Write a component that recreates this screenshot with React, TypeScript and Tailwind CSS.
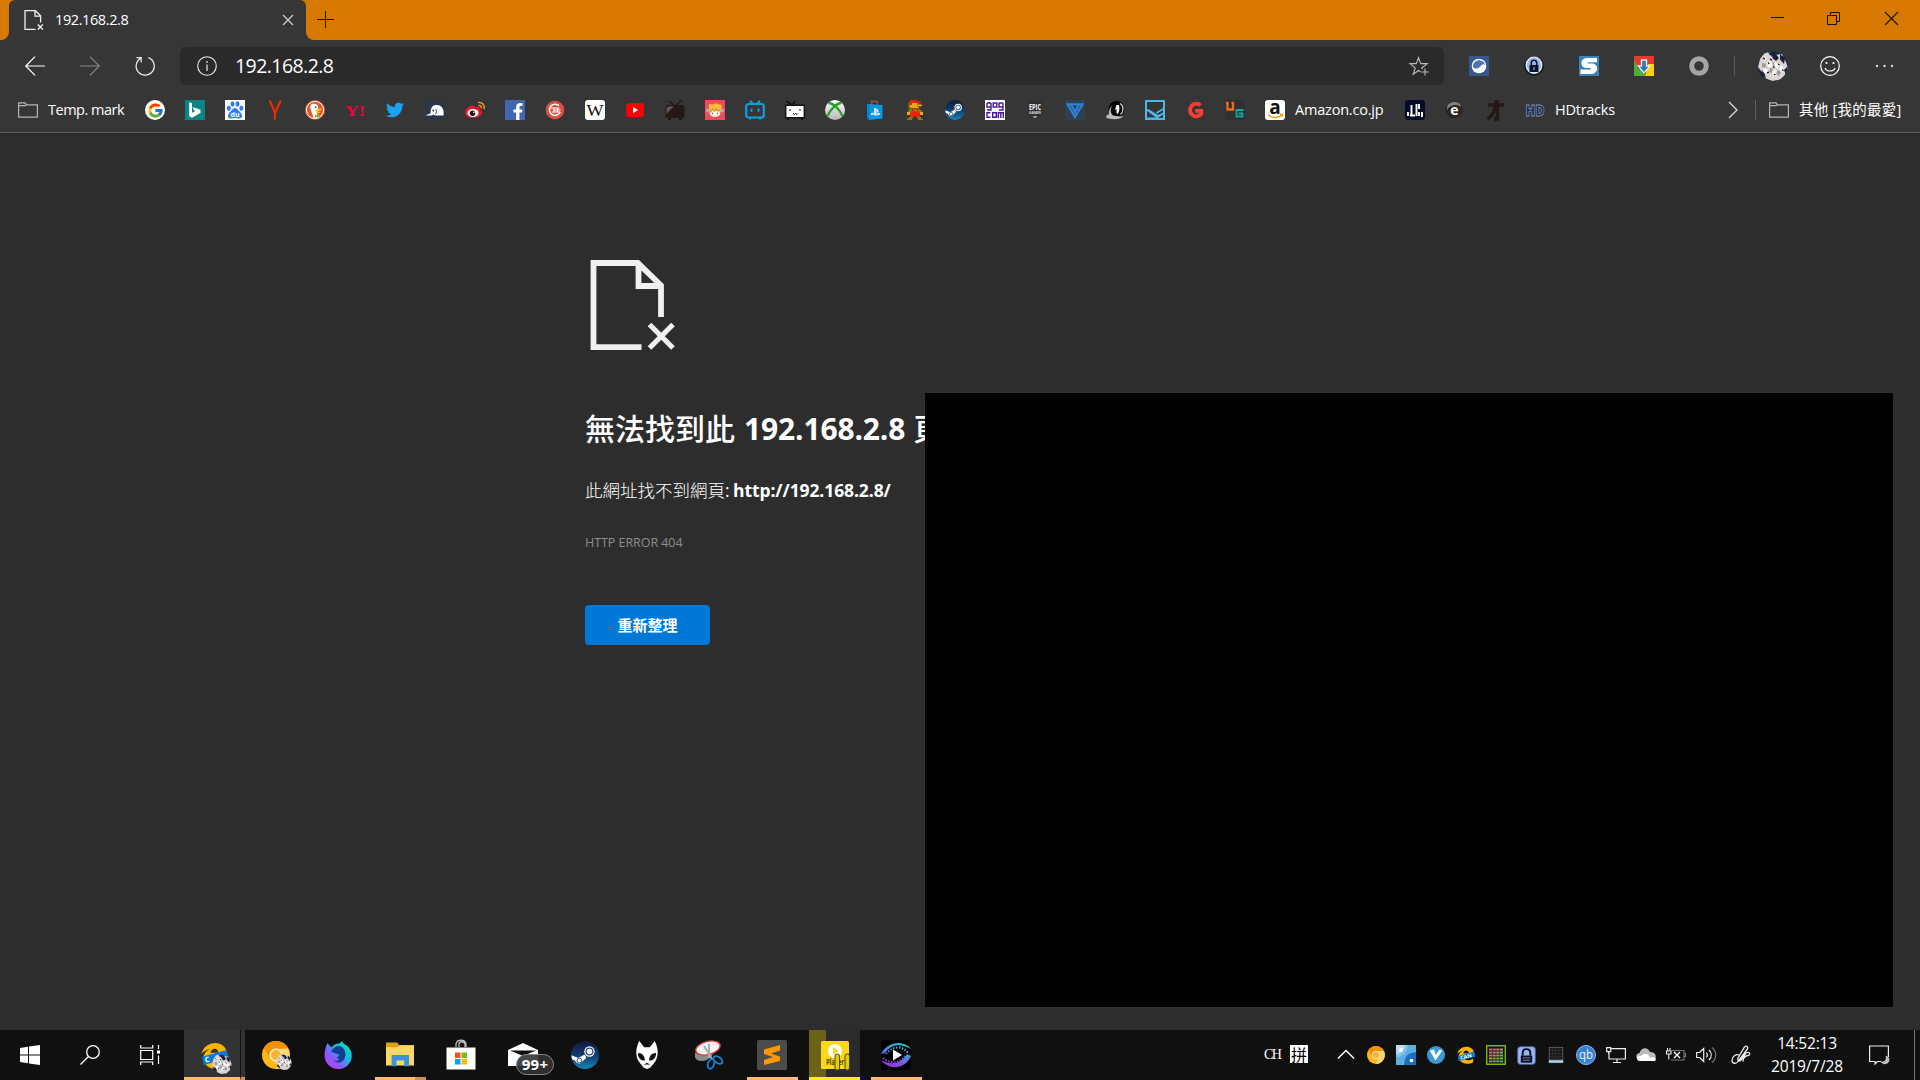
import React, { type ReactNode } from "react";
import { FcGoogle } from "react-icons/fc";
import { FaTwitter, FaFacebookF, FaPlaystation } from "react-icons/fa";

const UI = "font-['Open_Sans','Noto_Sans_CJK_TC',sans-serif]";

function Ico({ children, s = 20, vb = "0 0 20 20", className = "" }: { children: ReactNode; s?: number; vb?: string; className?: string }) {
  return (
    <svg width={s} height={s} viewBox={vb} fill="none" className={"shrink-0 overflow-visible " + className}>
      {children}
    </svg>
  );
}

function Txt({ x = 10, y, size, fill, weight = 700, family = "Open Sans", children, len }: { x?: number; y: number; size: number; fill: string; weight?: number; family?: string; children: ReactNode; len?: number }) {
  return (
    <text x={x} y={y} fontSize={size} fill={fill} fontWeight={weight} fontFamily={`'${family}', 'Noto Sans CJK TC', sans-serif`} textAnchor="middle" textLength={len} lengthAdjust="spacingAndGlyphs">
      {children}
    </text>
  );
}

const Folder = () => (
  <Ico>
    <path d="M.6 3.200V17.200H19.400V4.800H8.600L7 2.800H.6V5.600H7L8.600 4.800" stroke="#b4b4b4" strokeWidth="1.200" />
  </Ico>
);

const BrokenPage = () => (
  <Ico>
    <path d="M11.500 19.300H1V.7h10.400l5.200 5v6.800M11 .7v5.400h5.600" stroke="#f0f0f0" strokeWidth="1.300" />
    <path d="M13.800 14.400l5 5m0-5l-5 5" stroke="#f0f0f0" strokeWidth="1.400" />
  </Ico>
);

const SteamIcon = ({ s = 20, id }: { s?: number; id: string }) => (
  <Ico s={s}>
    <defs>
      <linearGradient id={id} x1="0" y1="0" x2="0" y2="1">
        <stop offset="0" stopColor="#12183c" />
        <stop offset=".55" stopColor="#123f73" />
        <stop offset="1" stopColor="#1387b8" />
      </linearGradient>
    </defs>
    <circle cx="10" cy="10" r="10" fill={`url(#${id})`} />
    <path d="M.2 10.200l5 2 4.600-2.600 1.200 2.400-3.600 3.400C6 17 3.600 16 3 14L.8 13z" fill="#fff" />
    <circle cx="13.200" cy="7.500" r="3.700" fill="#fff" />
    <circle cx="13.200" cy="7.500" r="2.400" stroke="#234a7b" strokeWidth=".9" />
    <circle cx="6" cy="14" r="1.700" stroke="#234a7b" strokeWidth=".7" />
  </Ico>
);

const bookmarks: ReactNode[] = [
  <div className="flex size-5 items-center justify-center rounded-full bg-white"><FcGoogle size={17} /></div>,
  <Ico><path d="M0 0h20v20H0z" fill="#0c8484" /><path d="M4.200 2.200l2.800 1v9.500l3.500-1.700-1.800-.9-1.200-3L15.500 9.800v3.200L7 17.800l-2.800-1.600z" fill="#fff" /></Ico>,
  <Ico>
    <path d="M0 0h20v20H0z" fill="#fff" />
    <g fill="#2f7df6">
      <ellipse cx="3.800" cy="8.200" rx="2" ry="2.700" /><ellipse cx="7.500" cy="4" rx="2" ry="2.700" /><ellipse cx="12.500" cy="4" rx="2" ry="2.700" /><ellipse cx="16.400" cy="8.200" rx="2" ry="2.700" />
      <path d="M10 8c2 0 3 2 4.500 3.500 3 2.700 3.500 6.800.2 7-1.700.2-3-.4-4.700-.4s-3 .6-4.700.4c-3.300-.2-2.800-4.300.2-7C7 10 8 8 10 8z" />
    </g>
    <Txt y={17} size={7} fill="#fff">du</Txt>
  </Ico>,
  <Ico><path d="M4.700.5l5.200 12v7.200M15.700.5l-5.500 12" stroke="#f52a05" strokeWidth="2.100" /></Ico>,
  <Ico>
    <circle cx="10" cy="10" r="10" fill="#de5833" /><circle cx="10" cy="10" r="8.600" stroke="#fff" strokeWidth="1" />
    <path d="M8.500 17.800L5.500 8.500C4.600 5.500 6.500 3.400 9 3.700c3 0 4.300 1.800 4.300 4.300l-1.500 2.500.6 7.300z" fill="#fff" />
    <path d="M10.800 9.700l5.400-1.500v2l-4 1 3.300 1-2.200 1.300-2.500-1z" fill="#fdd20a" /><path d="M10 14.500l2 1 2.500-1v3l-2.500-1-2 1z" fill="#65bc46" /><circle cx="10.500" cy="7.200" r=".9" fill="#2d4f8e" />
  </Ico>,
  <Ico><Txt y={15.500} size={15} fill="#f5003c" weight={700} family="Liberation Serif" len={20}>Y!</Txt></Ico>,
  <FaTwitter size={18} color="#1da1f2" />,
  <Ico><rect width="20" height="20" rx="3" fill="#2d3548" /><path d="M1 15.500c.5-1.500 4-1 4.600-2.500C5.500 8 7.500 5 11 5c4.500-.5 7.500 3 7.600 7v3.500H10l-1.500-1-2 1z" fill="#fff" /><circle cx="8.200" cy="10.500" r=".9" fill="#2d3548" /><path d="M10.500 9c2 2 .8 4.500-.5 5" stroke="#2d3548" /></Ico>,
  <Ico>
    <path d="M0 13C0 9 4 5.500 8 5.500c2 0 1.500 2 1.500 2 3-1.500 5.500-1 5 1.500 4 1.500 3 5 .5 7-5 3.500-15 2.500-15-3z" fill="#e6162d" />
    <ellipse cx="8" cy="13" rx="5.600" ry="4" fill="#fff" /><circle cx="7.500" cy="13.200" r="2.700" fill="#111" /><circle cx="8.700" cy="12.300" r=".8" fill="#fff" />
    <path d="M13 2.600c4-.6 7 2 6.200 6.500M13.500 5.400c2-.2 3.200 1 2.900 3" stroke="#f7941d" strokeWidth="1.500" />
  </Ico>,
  <div className="flex size-5 items-end justify-center overflow-hidden bg-[#4267b2] pl-1.5"><FaFacebookF size={17} color="#fff" /></div>,
  <Ico><circle cx="10" cy="10" r="9.300" fill="#df4e42" /><path d="M14 5.800A5.600 5.600 0 1 0 15.200 12" stroke="#fff" strokeWidth="1.600" /><path d="M5.500 8h9M7 12h8M9 8v4M12.500 8v4M10 10h5.500" stroke="#fff" strokeWidth="1.200" /></Ico>,
  <Ico><rect width="20" height="20" rx="3" fill="#fff" /><Txt y={15.500} size={17} fill="#111" weight={400} family="Liberation Serif" len={17}>W</Txt></Ico>,
  <Ico><rect x="1" y="3" width="18" height="14" rx="3.500" fill="#f00" /><path d="M8 7l5.200 3L8 13z" fill="#fff" /></Ico>,
  <Ico><path d="M4 1l6 5 7-6" stroke="#231815" strokeWidth="1.500" /><rect x=".5" y="5" width="19" height="13" rx="2" fill="#231815" /><path d="M3 18h3v2H3zM14 18h3v2h-3z" fill="#231815" /><path d="M1.500 14V7.500c3-1.500 5-1.500 7-1z" fill="#5b5756" /></Ico>,
  <Ico>
    <path d="M0 0h20v20H0z" fill="#f2475d" /><circle cx="2.700" cy="10.500" r="2" fill="#a9a4c9" /><circle cx="17.300" cy="10.500" r="2" fill="#a9a4c9" /><path d="M4 8C3 4 4 3 7 4.500 9 3 13 3 14.500 4.500c3 0 2.500 2 2 4l-1 4h-11z" fill="#f8bd37" /><ellipse cx="10" cy="13.300" rx="5.300" ry="3.700" fill="#fff3dc" /><path d="M5 12l3-3 1.500 2 2-2L13 11l2-1" stroke="#dc8a32" strokeWidth="1.200" /><path d="M7.500 12.700v1.500M12.500 12.700v1.500" stroke="#834c50" />
  </Ico>,
  <Ico><path d="M5 .8l3 3.200M15 .8L12 4M5 17v2.500M15 17v2.500" stroke="#0aa1dc" strokeWidth="2" /><rect x="1.200" y="4" width="17.600" height="13.500" rx="2.500" stroke="#0aa1dc" strokeWidth="2.200" /><path d="M6.500 8.500v3.200M13.500 8.500v3.200" stroke="#0aa1dc" strokeWidth="2" /></Ico>,
  <Ico><path d="M1.500 1L7 5l3-3.500M3 18v2M17 18v2" stroke="#111" strokeWidth="1.800" /><path d="M.7 5.200h18.600v12.600H.7z" fill="#fff" stroke="#111" strokeWidth="1.400" /><path d="M5 9v2M15 9v2M8 13.500l1.500 1 1-1 1.500 1 1-1" stroke="#111" /></Ico>,
  <Ico>
    <defs><linearGradient id="xball" x1="0" y1="0" x2="0" y2="1"><stop offset="0" stopColor="#fff" /><stop offset="1" stopColor="#b5b5b5" /></linearGradient></defs>
    <circle cx="10" cy="10" r="10" fill="url(#xball)" /><path d="M3.500 3C8 3 14.500 9 17.500 16M16.500 3C12 3 5.500 9 2.500 16" stroke="#2c9e27" strokeWidth="2.300" />
  </Ico>,
  <Ico><path d="M6.500 5V1.200l6 .5V5" stroke="#8a543c" strokeWidth="1.600" /><path d="M2 4l15.500 1v13.500L4 20z" fill="#0798e5" /><path d="M2 4h3l-1 16-2-2z" fill="#0784ca" /><FaPlaystation x={5.500} y={7} size={10} color="#fff" /></Ico>,
  <Ico>
    <path d="M5 0h7v1.500h4V3H4V1.500h1z" fill="#ef2010" /><path d="M5 3h9v1.500h3V6h-3v2H6L3 7V4z" fill="#f5a51c" /><path d="M4 3h3v2H5v2H3V4zM12 3h1.500v2H12zM12 6h4v1h-4z" fill="#7b6404" /><path d="M4 8.500h10l3 2.500v2h-3v2H6v-2H3v-2z" fill="#7e8008" /><path d="M7 8.500h1.500v3H12v-3h1.500v3L15 14v3h-4l-1-1-1 1H5v-3l2-2.500z" fill="#ef2010" /><path d="M4 17h4v1.500H7V20H2v-1.500h2zM12 17h4v1.500h2V20h-5v-1.500h-1z" fill="#7e8008" /><path d="M2 12h3v3H2zM15 12h3v3h-3z" fill="#f5a51c" />
  </Ico>,
  <SteamIcon id="steam-bookmark" />,
  <Ico><path d="M0 0h20v20H0z" fill="#fff" /><path d="M6 3v7H2M2 3h4M2 3v4h4M8.200 3h3.600v4H8.200zM18 3v7h-4M14 3h4M14 3v4h4M5.500 12.700H2v4.500h3.500M7.700 12.700h3.600v4.500H7.700zM13.300 17.900v-5.200h5v5.200M15.800 12.700v5.200" stroke="#46169a" strokeWidth="1.400" /></Ico>,
  <Ico><path d="M3.500 1h13v15L10 19l-6.500-3z" fill="#2f2f2f" /><Txt y={10} size={9.500} fill="#f5f5f5" len={12}>EPIC</Txt><Txt y={14.200} size={4} fill="#ddd" len={12}>GAMES</Txt><path d="M7.500 16.500h5L10 18z" fill="#eee" /></Ico>,
  <Ico><path d="M0 0h20v20H0z" fill="#2f4050" /><path d="M2.500 4.200h15L10 17zM6 4.200L10 12l4-7.800" stroke="#2e84da" strokeWidth="2.100" /></Ico>,
  <Ico><circle cx="11.500" cy="9" r="8" fill="#050505" /><path d="M1 17.500c4 2 14 3 17.500-1.500-4 1-7 0-10.500-.5C5 13 5 8 8 5c-4 3-4 6-4 9.500-2 0-3 1.500-3 3z" fill="#bbb" /><path d="M11.500 5l2.500 0 .5 4-1.500 5-1.500-1V9l-1.500 1z" fill="#fff" /><path d="M15 3.500c4 2 4 8 .5 11" stroke="#ddd" strokeWidth="1.200" /></Ico>,
  <Ico><path d="M0 0h20v20H0z" fill="#4fb6ec" /><path d="M2 2h16v10.500l-5 2.500L5 10 2 9z" fill="#343434" /><path d="M2 11l9 6.500H2zM18 14.500v3.500h-5z" fill="#343434" /><path d="M11.500 13L18 9" stroke="#4fb6ec" strokeWidth="1.500" /></Ico>,
  <Ico><path d="M15.500 5.300A6.300 6.300 0 1 0 16.200 14V10.800H10.200" stroke="#fa3d35" strokeWidth="3.800" /></Ico>,
  <Ico><path d="M0 0h20v20H0z" fill="#303030" /><path d="M1 3h1.500v6.500H8V3H6.500" stroke="#f26a16" strokeWidth="2.300" /><path d="M18.500 10H11.500v6.500h6v-3h-4" stroke="#14a49a" strokeWidth="1.900" /></Ico>,
];

const BookmarkIcon = ({ children }: { children: ReactNode }) => <div className="flex size-5 shrink-0 items-center justify-center">{children}</div>;

const Canary = ({ s = 28 }: { s?: number }) => (
  <Ico s={s}>
    <circle cx="10" cy="10" r="10" fill="#fdb813" />
    <path d="M1.300 5A10 10 0 0 1 18.700 5L10 6.200 5.500 12z" fill="#f39200" />
    <path d="M18.700 5.500A10 10 0 0 1 10 20l4-8-1-6.500z" fill="#fdd477" />
    <circle cx="10" cy="10" r="4.200" fill="#f9b233" stroke="#ffe9b8" strokeWidth="1.200" />
  </Ico>
);

const Husky = ({ s }: { s: number }) => (
  <Ico s={s} vb="0 0 30 30">
    <path d="M2 8L6 2l6-1 5 3 7-1 4 8 2 6-3 7-5 5-8 1-7-3-4-7-3-4z" fill="#d9d5d3" />
    <path d="M10 1l7 1 4 5-3 3-5-4zM22 3l5 4-1 6-4-5zM1 20l5 1 2 6-5-3zM26 19l4-4-2 9z" fill="#17203d" />
    <path d="M6 5l3 2-3 3zM9 12l4-2 2 4-4 3zM17 11l4 3-1 4-4-3zM23 14l3 3-2 5-3-4zM6 17l4 2-1 4-4-2zM14 20l4-1 1 5-4 2zM12 4l3 3-2 2z" fill="#fff" />
    <path d="M4 12l4 1-1 4-3-1zM12 17l3 1-1 4-3-1zM20 19l3 2-2 4-3-2zM14 10l2 2 1 4-2-1z" fill="#a09694" />
    <path d="M5 7l2 1M10 12l1.500.7M15 16l1.500.5M20 13l1.500.8M9 22l2-.8M24 19l1.500.5M16 24l1.500-.8M12 8l2 1" stroke="#25252b" strokeWidth="1.400" />
    <path d="M13 4l2 2M22 8l2 3M4 19l1 2" stroke="#a33f38" strokeWidth=".9" />
  </Ico>
);

const EdgeCan = ({ s, label = "CAN" }: { s: number; label?: string }) => (
  <Ico s={s}>
    <path d="M.3 9C2-1 18-3 19.500 9v3H7c1 4 7 5 11 2v4C9 23-1 17 2.500 9 4 6 7 5 7 5 3.500 6 1.700 7 .3 9zM7 8h6c-.5-4-5-4-6 0z" fill="#fbb404" fillRule="evenodd" />
    <path d="M1 11l18-5 1 6L2 17z" fill="#087bd6" />
    <g transform="rotate(-14 10 12)">{label === "CAN" ? <Txt x={10} y={13.800} size={5.600} fill="#fff" len={13}>CAN</Txt> : <Txt x={4.500} y={13.600} size={5.600} fill="#fff">C</Txt>}</g>
  </Ico>
);

function TopBar() {
  return (
    <header className="flex h-10 bg-[#d77900]">
      <div className="flex w-[9px] bg-[#363636]"><div className="w-[9px] rounded-br-lg bg-[#d77900]" /></div>
      <div className="flex h-10 w-[297px] items-center rounded-t-md bg-[#363636] pl-[15px] pr-[11px]">
        <BrokenPage />
        <span className="ml-[11px] flex-1 text-[14.500px] tracking-[-0.400px] text-white">192.168.2.8</span>
        <Ico s={12} vb="0 0 12 12" className="mr-px"><path d="M1 1l10 10M11 1L1 11" stroke="#ccc" strokeWidth="1.300" /></Ico>
      </div>
      <div className="flex flex-1 bg-[#363636]">
        <div className="flex flex-1 items-center rounded-bl-lg bg-[#d77900] pl-[11px]">
          <Ico s={17} vb="0 0 17 17" className="mb-0.5"><path d="M8.500 0v17M0 8.500h17" stroke="#1a1000" /></Ico>
          <div className="ml-auto flex items-center gap-[43px] pb-[3px] pr-[22px]">
            <Ico s={13} vb="0 0 13 13"><path d="M0 5.500h13" stroke="#111" /></Ico>
            <Ico s={13} vb="0 0 13 13"><path d="M.5 3.500h9v9h-9zM3.500 3.500v-3h9v9h-3" stroke="#111" /></Ico>
            <Ico s={13} vb="0 0 13 13" className="ml-0.5"><path d="M0 0l13 13M13 0L0 13" stroke="#111" strokeWidth="1.100" /></Ico>
          </div>
        </div>
      </div>
    </header>
  );
}

function Toolbar() {
  return (
    <div className="flex h-[52px] items-center bg-[#363636] pl-[25px]">
      <Ico><path d="M20 10H1M10 .7L.8 10l9.200 9.300" stroke="#fff" strokeWidth="1.200" /></Ico>
      <Ico className="ml-[35px]"><path d="M0 10h19M10 .7l9.200 9.300-9.200 9.300" stroke="#858585" strokeWidth="1.200" /></Ico>
      <Ico className="ml-[35px]" s={20} vb="0 0 21 21"><path d="M6.300 2.200A9.500 9.500 0 1 0 14 1.700M1.500 1.700h5v5" stroke="#eee" strokeWidth="1.300" /></Ico>
      <div className="ml-[25px] flex h-[38px] w-[1264px] items-center rounded-md bg-[#2a2a2a] pl-[17px] pr-[15px]">
        <Ico><circle cx="10" cy="10" r="9.300" stroke="#eee" strokeWidth="1.100" /><path d="M10 8.500V15M10 5v2" stroke="#ddd" strokeWidth="1.300" /></Ico>
        <span className="ml-[18px] text-[19.500px] tracking-[-0.560px] text-white">192.168.2.8</span>
        <Ico className="ml-auto"><path d="M13.500 13.200L12.800 12l5.400-4.400h-6.500L9.500 1.500 7.300 7.600H1l5.200 4.300-2 6.400L9.500 14.500l2 1.500M16 12.500v7M12.500 16h7" stroke="#bbb" strokeWidth="1.100" /></Ico>
      </div>
      <div className="ml-[25px] flex items-center gap-[35px]">
        <Ico><path d="M0 0h20v20H0z" fill="#35588f" /><circle cx="10" cy="10" r="7.300" fill="#fff" /><path d="M3.800 10.500a6.300 6.300 0 0 1 12.400-1.500C13 6 11.500 12 8 12.500c-2 .3-3.500-.5-4.200-2z" fill="#4b75ac" /></Ico>
        <Ico><circle cx="10" cy="10" r="9" fill="#9db9f8" stroke="#111" strokeWidth="1.400" /><circle cx="10" cy="9" r="7.800" stroke="#e6ecff" strokeWidth="1.200" /><path d="M5.500 9h9v7h-9z" fill="#101525" /><path d="M7.300 9V6.800c0-3.500 5.400-3.500 5.400 0V9" stroke="#101525" strokeWidth="1.600" /><path d="M10 11v3" stroke="#9db9f8" /></Ico>
        <Ico><path d="M0 0h20v20H0z" fill="#3980bc" /><path d="M18 2H8C.5 2 .5 12 7.500 12h3.500c1.500 0 1.500 1.500 0 1.500H1.500V18H12c8 0 8-10.500 1-10.500H9.500c-1.500 0-1.500-1.300 0-1.300H18z" fill="#fff" /></Ico>
        <Ico><path d="M0 0h20v10H0z" fill="#e33b32" /><path d="M0 4l8 16H0z" fill="#4caf3e" /><path d="M0 20l6-8 6 8z" fill="#4caf3e" /><path d="M20 8v12h-9l3-12z" fill="#fdd208" /><path d="M7.500 4h5v6h3.500L10 17l-6-7h3.500z" fill="#2d7bb7" stroke="#eee" strokeWidth="1.300" /></Ico>
        <Ico><circle cx="10" cy="10" r="7.300" stroke="#a5a5a5" strokeWidth="5" /></Ico>
      </div>
      <div className="ml-[25px] h-5 w-px bg-[#5a5a5a]" />
      <div className="ml-[23px] flex size-[30px] items-center justify-center overflow-hidden rounded-full bg-[#18284d]"><Husky s={30} /></div>
      <Ico className="ml-8"><circle cx="10" cy="10" r="9.300" stroke="#fff" strokeWidth="1.200" /><path d="M5 12c1.500 4 8.500 4 10 0" stroke="#fff" strokeWidth="1.200" /><circle cx="6.500" cy="7" r="1.100" fill="#fff" /><circle cx="13.500" cy="7" r="1.100" fill="#fff" /></Ico>
      <Ico className="ml-[35px]"><circle cx="2" cy="10" r="1.200" fill="#ddd" /><circle cx="9.500" cy="10" r="1.200" fill="#ddd" /><circle cx="17" cy="10" r="1.200" fill="#ddd" /></Ico>
    </div>
  );
}

function BookmarkBar() {
  return (
    <nav className="flex h-[41px] items-center border-b border-[#5c5c5c] bg-[#363636] pb-1 pl-[18px] text-[14.500px] text-white">
      <Folder />
      <span className="ml-2.5 w-[77px] whitespace-nowrap tracking-[-0.500px]">Temp. mark</span>
      <div className="ml-5 flex items-center gap-5">
        {bookmarks.map((b, i) => <BookmarkIcon key={i}>{b}</BookmarkIcon>)}
        <Ico><rect width="20" height="20" rx="3" fill="#fff" /><Txt y={13.500} size={19} fill="#111">a</Txt><path d="M3 14.800c4 3.500 10 3.500 14 .5m-2-.8l2.500-.2-.5 2.200" stroke="#ff9900" strokeWidth="1.300" /></Ico>
      </div>
      <span className="ml-2.5 w-[90px] whitespace-nowrap tracking-[-0.200px]">Amazon.co.jp</span>
      <div className="ml-5 flex items-center gap-5">
        <Ico><rect width="20" height="20" rx="3" fill="#070b2a" /><path d="M3 12v4M6.500 16V5M5 15.500h5M11.500 16V4M14 4v5M14 12v4M17 12v5" stroke="#fff" strokeWidth="1.900" /></Ico>
        <Ico><circle cx="9" cy="10" r="8.500" fill="#2a2424" /><path d="M2 10C1 4 6 1.500 11 2c4 1 5 3 5 5-3-3-11-3-14 3z" fill="#858080" /><Txt x={9.500} y={14.500} size={14} fill="#fff">e</Txt></Ico>
        <Ico><path d="M3 5h16M11.500 0C11 7 9 15 2.500 19M12.500 1v18H9" stroke="#231815" strokeWidth="3.400" /></Ico>
        <Ico><g stroke="#7f94b8" strokeWidth=".8"><Txt y={15.500} size={15} fill="#15294f" len={19} weight={800}>HD</Txt></g></Ico>
      </div>
      <span className="ml-2.5 w-[61px] whitespace-nowrap tracking-[-0.250px]">HDtracks</span>
      <Ico className="ml-[109px]"><path d="M4 2l8 8-8 8" stroke="#ddd" strokeWidth="1.300" /></Ico>
      <div className="ml-[10px] h-5 w-px bg-[#626262]" />
      <div className="ml-[13px] flex items-center gap-[10px]">
        <Folder />
        <span className="whitespace-nowrap tracking-[0.250px]">其他 [我的最愛]</span>
      </div>
    </nav>
  );
}

function ErrorPage() {
  return (
    <main className="relative h-[897px] bg-[#2d2d2d] pl-[585px] pt-[127px] text-white">
      <Ico s={90} vb="0 0 90 90">
        <path d="M56.500 87.200H8.500V3h44.300L76 25.500V57M53.500 3v23H76" stroke="#f0f0f0" strokeWidth="5.800" />
        <path d="M64.500 64.500l23.500 23.500m0-23.500l-23.500 23.500" stroke="#f0f0f0" strokeWidth="5.200" />
      </Ico>
      <h1 className="mt-[58px] flex h-10 items-center whitespace-nowrap text-[30px] font-bold"><span className="w-[159px] font-medium">無法找到此</span><span className="tracking-[-0.150px]">192.168.2.8</span><span className="ml-2 font-medium">頁面</span></h1>
      <p className="mt-[28px] h-7 whitespace-nowrap text-[17.500px] leading-7"><span className="font-['Noto_Sans_CJK_TC',sans-serif] font-light">此網址找不到網頁</span><span className="mr-[3.500px]">:</span><b className="tracking-[-0.100px]">http://192.168.2.8/</b></p>
      <p className="mt-[29px] h-5 text-[12.500px] font-medium leading-5 tracking-[-0.050px] text-[#8e8e8e]">HTTP ERROR 404</p>
      <button className="mt-[52px] flex h-10 w-[125px] items-center justify-center rounded-sm bg-[#0078d7] text-[15px] font-bold">重新整理</button>
      <section className="absolute left-[925px] top-[260px] h-[614px] w-[968px] bg-black" />
    </main>
  );
}

function Task({ w, children, state = "" }: { w: number; children?: ReactNode; state?: string }) {
  return <div style={{ width: w }} className={"flex h-[50px] shrink-0 items-center justify-center " + state}>{children}</div>;
}

const active = "border-b-[3px] border-[#ffb970] pt-[3px]";

function Taskbar() {
  return (
    <footer className="flex h-[50px] bg-[#101010] text-white">
      <Task w={60}><Ico><path d="M0 3l8-1.200V9.500H0zM9 1.600L20 0v9.500H9zM0 10.500h8v7.700L0 17zM9 10.500h11V20L9 18.400z" fill="#fff" /></Ico></Task>
      <Task w={60}><Ico><circle cx="13" cy="7" r="6.300" stroke="#fff" strokeWidth="1.300" /><path d="M8.500 11.500L.5 19.500" stroke="#fff" strokeWidth="1.300" /></Ico></Task>
      <Task w={60}><Ico><path d="M.7 0v3h12V0M.7 20v-3h12v3M.7 5.500h12v9H.7zM18.500 0v4M18.500 10.500V19" stroke="#fff" strokeWidth="1.200" /><path d="M17 5.500h3v3h-3z" fill="#fff" /></Ico></Task>
      <div className="w-1" />
      <Task w={56} state={"bg-[#333333] pl-1 " + active}>
        <div className="relative"><EdgeCan s={27} label="C" /><div className="absolute left-[11px] top-[12px]"><Husky s={20} /></div></div>
      </Task>
      <Task w={5} state="border-b-[3px] border-[#c8935b] border-l border-l-[#101010] bg-[#333333]" />
      <Task w={62}><div className="relative"><Canary /><div className="absolute left-[14px] top-[13px]"><Husky s={16} /></div></div></Task>
      <Task w={62}>
        <Ico s={28}>
          <defs><linearGradient id="fox" x1="1" y1="0" x2="0" y2="1"><stop offset="0" stopColor="#00ef9b" /><stop offset=".4" stopColor="#18b8e8" /><stop offset=".65" stopColor="#8c57fb" /><stop offset="1" stopColor="#b63cf9" /></linearGradient></defs>
          <path d="M2.500 1.500L4.500 4l1.200.2C7 2.500 9 1.500 11 1.800L13 0c0 1 1 1.800 2 2.500 3.500 2 5 5 4.800 8.500C19.500 16.500 15 20 10 20S.5 16 .4 10.500C.3 7.500 1.200 4 2.500 1.500z" fill="url(#fox)" />
          <path d="M5 7.500C7 3.500 11 2.500 13 4.500c2.500 2 3 6 1.500 8.500-1.800 3-6 3-7.500 1 2 .8 3 0 4-1l-2.500-1C10 12 11 11 10.500 9.500L8 9z" fill="#123d91" />
        </Ico>
      </Task>
      <div className="w-[6px]" />
      <Task w={40} state={"pl-[10px] " + active}>
        <Ico s={28}><path d="M0 1h8l1.500 2H20v14H0z" fill="#dca211" /><path d="M0 4.500h8l2-1.500h10v14.500H0z" fill="#ffd768" /><path d="M4 10h12.500v8H13v-4H7.500v4H4z" fill="#3c93dc" /></Ico>
      </Task>
      <Task w={11} state="border-b-[3px] border-[#c8935b]" />
      <div className="w-[5px]" />
      <Task w={61}>
        <Ico s={30} vb="0 0 30 30" className="-ml-px"><path d="M10 7V4c1-5 9-5 10 0v3M13 7V4c0-3 5-3 6 0v3" stroke="#bbb" strokeWidth="1.300" /><path d="M.5 7.500h29v22H.5z" fill="#fff" /><path d="M9 12.500h5.500V18H9z" fill="#f25022" /><path d="M15.500 12.500H21V18h-5.500z" fill="#7fba00" /><path d="M9 19h5.500v5.500H9z" fill="#00a4ef" /><path d="M15.500 19H21v5.500h-5.500z" fill="#ffb900" /></Ico>
      </Task>
      <Task w={62}>
        <div className="relative"><Ico s={30} vb="0 0 30 30"><path d="M0 10L15 3l15 7v16H0z" fill="#fff" /><path d="M2 10.500h26L15 16z" fill="#101010" /></Ico>
          <span className="absolute left-[8px] top-[14px] flex h-[21px] w-[38px] items-center justify-center rounded-full border border-[#888] bg-[#333]/90 text-[15px] font-bold tracking-[0.200px]">99+</span></div>
      </Task>
      <Task w={62}><SteamIcon id="steam-task" s={28} /></Task>
      <Task w={62}><Ico s={28}><path d="M4.500 0l3.500 4.500h4L15.500 0C18 5 18.500 10 16 14.500L12.500 19 10 20l-2.500-1L4 14.500C1.500 10 2 5 4.500 0z" fill="#fff" /><path d="M3.500 8.500C7 8.500 8.500 11 8.500 14 5.500 14 3.500 12 3.500 8.500zM16.500 8.500C13 8.500 11.500 11 11.500 14c3 0 5-2 5-5.500zM7.700 17L10 15.500l2.300 1.500L10 16.700z" fill="#101010" /></Ico></Task>
      <Task w={62}>
        <Ico s={30} vb="0 0 30 30"><path d="M1 13l19-5-2 8c-6 7-16 6-17 1z" fill="#8b8b8b" /><ellipse cx="14" cy="8" rx="12.500" ry="6.500" transform="rotate(-15 14 8)" fill="#f4f4f4" stroke="#df3737" strokeWidth="1.300" /><path d="M10 6l8 13M15 4l0 14" stroke="#aaa" strokeWidth="2" /><ellipse cx="17" cy="24" rx="3" ry="5" transform="rotate(20 17 24)" stroke="#1384d7" strokeWidth="1.800" /><ellipse cx="24" cy="20" rx="3" ry="5" transform="rotate(-55 24 20)" stroke="#1384d7" strokeWidth="1.800" /></Ico>
      </Task>
      <div className="w-[7px]" />
      <Task w={51} state={active}><Ico s={30} vb="0 0 30 30" className="-ml-px"><rect width="30" height="30" rx="1.500" fill="#4b4b4b" /><path d="M23 5v5.500l-9 3 9 3V21L7 25v-5l9-3-9-3V9.500z" fill="#ff9800" /></Ico></Task>
      <div className="w-[11px]" />
      <Task w={51} state="border-b-[3px] border-[#ffef00] bg-[linear-gradient(to_right,#6b6218_17px,#2b2b2b_17px)] pt-[3px]">
        <Ico s={30} vb="0 0 30 30"><rect x="1" y="1" width="28" height="28" rx="1.500" fill="#fbd918" /><circle cx="15" cy="11" r="7" fill="#fff" /><path d="M13 7l6 4-6 4z" fill="#fbd918" /><Txt x={15} y={25} size={8} fill="#4b4300" len={18}>Player</Txt><rect x="15" y="14" width="4.500" height="16" rx="2" fill="#e6cb00" stroke="#4b4b20" /><rect x="25" y="14" width="4.500" height="16" rx="2" fill="#e6cb00" stroke="#4b4b20" /></Ico>
      </Task>
      <div className="w-[11px]" />
      <Task w={51} state={active}>
        <Ico s={30} vb="0 0 30 30" className="-ml-px"><defs><linearGradient id="eye" x1=".8" y1="0" x2=".3" y2="1"><stop offset="0" stopColor="#25c9d6" /><stop offset=".5" stopColor="#557ee0" /><stop offset="1" stopColor="#a22be4" /></linearGradient></defs><rect width="30" height="30" rx="3" fill="#000" /><path d="M0 14C7 1 23 0 30 9 20 3 10 4 4 13zM0 20c8 5 20 5 26-6l4 2C25 29 8 31 0 20z" fill="url(#eye)" /><path d="M5 14C12 5 22 6 27 13M2 18c8 7 18 5 22-2" stroke="url(#eye)" strokeDasharray="1.500 1.500" strokeWidth="2" /><path d="M12 9.500l9 5.500-9 5.500z" fill="#fff" /></Ico>
      </Task>

      <div className="ml-auto flex h-[50px] items-center">
        <span className="mb-[2px] w-[26px] font-['Liberation_Serif',serif] text-[14px] tracking-[-1.500px]">CH</span>
        <span className="mb-[2px] flex size-[18px] items-center justify-center bg-white font-['Noto_Sans_CJK_SC',sans-serif] text-[16px] leading-none text-black">拼</span>
        <Ico s={18} className="ml-[29px]"><path d="M1 14l9-9 9 9" stroke="#fff" strokeWidth="1.600" /></Ico>
        <div className="ml-[6px] flex items-center">
          {trayIcons.map((icon, i) => <div key={i} className="flex w-[30px] justify-center">{icon}</div>)}
        </div>
        <Ico className="ml-[10px]"><path d="M8 10c-3-1-7 1-7 5.500 0 3 4 4 6 1L16.500 4c1-2-1-4-3-2L7 13c-1 3 1 4 3 2l5-7c4-2 5 2 2 2.500-3 .5-5 3-5 6" stroke="#eee" strokeWidth="1.300" /></Ico>
        <div className="ml-[16px] flex w-[80px] flex-col items-center text-[15.500px] leading-[23px]"><span className="tracking-[-0.200px]">14:52:13</span><span className="tracking-[-0.150px]">2019/7/28</span></div>
        <Ico className="ml-[22px]"><path d="M12 16.500H8.500L6 19v-2.500H.6V1h18.800v11" stroke="#eee" strokeWidth="1.200" /><path d="M17 11c1 4-1 6-5 6 3 3 8 2 8-2 0-2-1-3-3-4z" fill="#bbb" stroke="#eee" strokeWidth=".6" /></Ico>
        <div className="ml-[25px] mr-[5px] h-[50px] w-px bg-[#777]" />
      </div>
    </footer>
  );
}

const trayIcons: ReactNode[] = [
  <Canary s={18} />,
  <Ico><rect width="20" height="20" rx="1.500" fill="#7fc4ee" /><path d="M0 0h9c0 5-4 9-9 9z" fill="#b5def7" /><path d="M0 12C7 12 11 8 12 0h8v6C12 7 8 12 7 20H0z" fill="#5eaee4" /><path d="M20 7v13H8C8 12 12 7 20 7z" fill="#1d6fc4" /><circle cx="5" cy="5" r="2" fill="#fff" /><circle cx="15.500" cy="15.500" r="1.800" fill="#fff" /></Ico>,
  <Ico s={18}><circle cx="10" cy="10" r="10" fill="#3b9ad6" /><path d="M3 5l5-1 1.500 6L14 4l3 1-7.500 11z" fill="#fff" /></Ico>,
  <EdgeCan s={18} />,
  <Ico>
    <defs><linearGradient id="heat" gradientUnits="userSpaceOnUse" x1="3" y1="3" x2="17" y2="17"><stop offset="0" stopColor="#df4b95" /><stop offset=".45" stopColor="#b99170" /><stop offset="1" stopColor="#38d44f" /></linearGradient></defs>
    <path d="M.7.700h18.600v18.600H.7z" fill="#111" stroke="#76b900" strokeWidth="1.400" /><path d="M3 4.500h14M3 7.500h14M3 10.500h14M3 13.500h14M3 16.400h14" stroke="url(#heat)" strokeWidth="1.900" /><path d="M6.500 3v14M10 3v14M13.500 3v14" stroke="#222" strokeWidth=".6" />
  </Ico>,
  <Ico s={19}><rect x=".7" y=".7" width="18.600" height="18.600" rx="3" fill="#9cb4ef" stroke="#4861a9" /><path d="M4 10h12v7.500H4z" fill="#0b1020" /><path d="M6 10V7c0-5 8-5 8 0v3" stroke="#0b1020" strokeWidth="2" /><path d="M6 12.500h8M6 15h8" stroke="#9cb4ef" strokeWidth=".7" /></Ico>,
  <Ico s={18}><path d="M2 1h16v18H2z" fill="#666" /><path d="M3 2h14v13H3z" fill="#171717" /><path d="M6 2v13M9.500 2v13M13 2v13M3 5h14M3 8.500h14M3 12h14" stroke="#3a3a3a" strokeWidth=".7" /><path d="M2 16h16v2.500H2z" fill="#aad9ec" /></Ico>,
  <Ico><circle cx="10" cy="10" r="9.500" fill="#397fd2" stroke="#8ebdf4" /><Txt y={13.500} size={12} fill="#e8f5ff" weight={400} len={14}>qb</Txt></Ico>,
  <Ico><path d="M5 3.600h14.400V14H3V8M11 14v4M7 17.500h8M.7 2.600h4v4h-4zM2.700 6.500V9" stroke="#eee" strokeWidth="1.200" /></Ico>,
  <Ico><path d="M5 14.500c-6 0-6-6-1.500-6.500C5 3 11 1 14 7c5 0 7 3 5 8-1 1-10 1-14-.5z" fill="#bbb" /><path d="M3 16c-4-2-2-6 2-5 4-4 8-2 9 2 5-2 7 1 5 3z" fill="#fff" /></Ico>,
  <Ico><path d="M6 5.500h12v9.500H5M18.500 8.500h1v3h-1" stroke="#777" strokeWidth="1.100" /><path d="M8 7l6 6m0-6l-6 6" stroke="#fff" strokeWidth="1.300" /><path d="M1.500 3v3M4 3v3M.5 6h4.500v3H.5zM2.800 9v5.500" stroke="#eee" strokeWidth="1.100" /></Ico>,
  <Ico><path d="M.7 7.500h3l4-4v13l-4-4h-3z" stroke="#eee" strokeWidth="1.200" /><path d="M10.500 7.500c1 1.500 1 3.500 0 5M13 5c3 3 3 7 0 10" stroke="#eee" strokeWidth="1.200" /><path d="M16 2.500c5 4 5 11 0 15" stroke="#777" strokeWidth="1.200" /></Ico>,
];

export default function App() {
  return (
    <div className={"h-[1080px] w-[1920px] overflow-hidden bg-[#2d2d2d] " + UI}>
      <TopBar />
      <Toolbar />
      <BookmarkBar />
      <ErrorPage />
      <Taskbar />
    </div>
  );
}
